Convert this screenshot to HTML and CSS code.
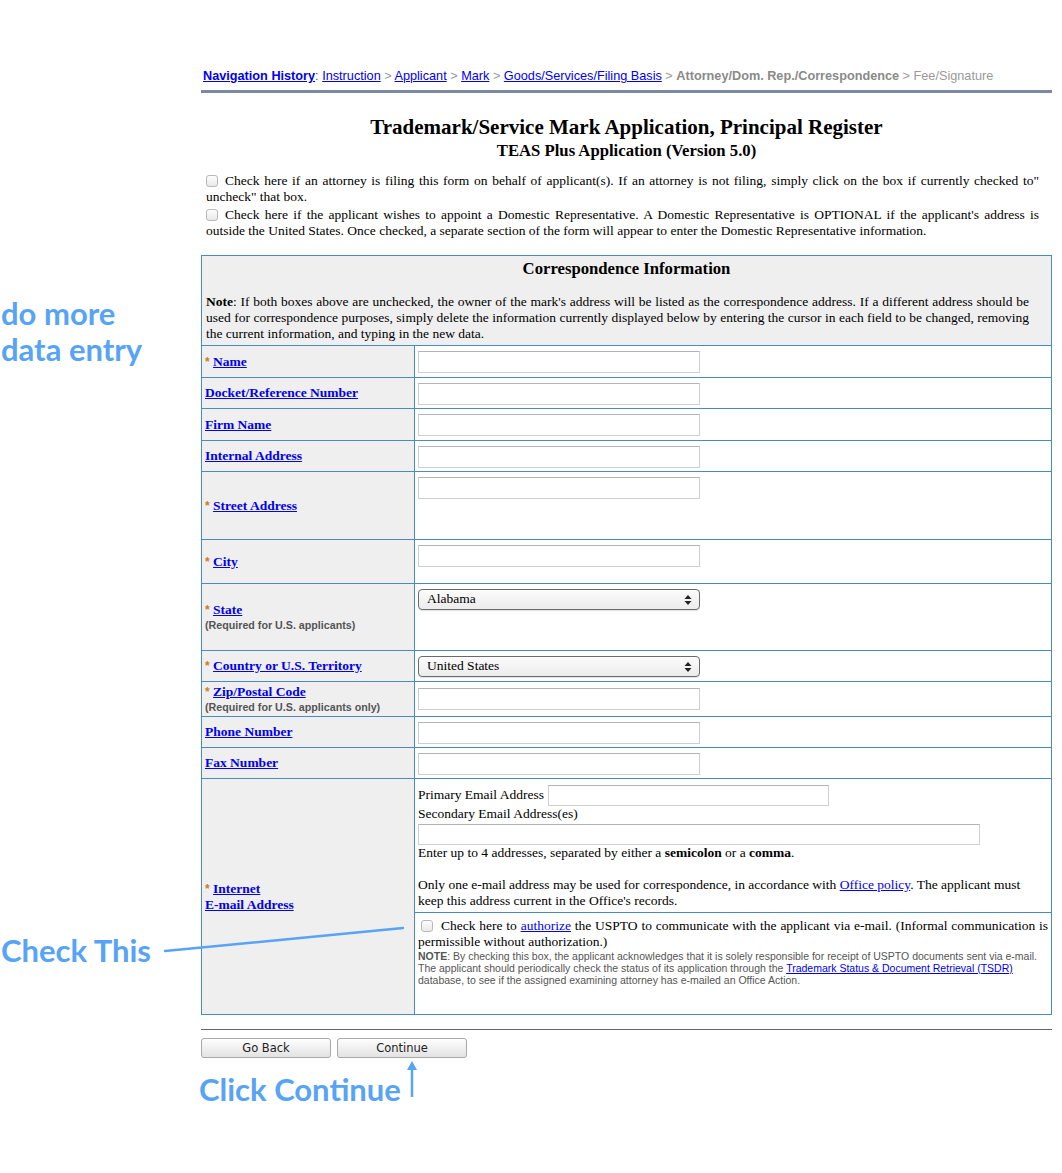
FILE: index.html
```html
<!DOCTYPE html>
<html>
<head>
<meta charset="utf-8">
<title>Trademark/Service Mark Application</title>
<link rel="stylesheet" href="styles.css">
</head>
<body>
<div class="page">
  <div class="main">
    <div class="nav">
      <a class="navhead" href="#">Navigation History</a><span class="colon">:</span>
      <a href="#">Instruction</a> <span class="sep">&gt;</span>
      <a href="#">Applicant</a> <span class="sep">&gt;</span>
      <a href="#">Mark</a> <span class="sep">&gt;</span>
      <a href="#">Goods/Services/Filing Basis</a> <span class="sep">&gt;</span>
      <span class="current">Attorney/Dom. Rep./Correspondence</span> <span class="sep">&gt;</span>
      <span class="future">Fee/Signature</span>
    </div>

    <h1 class="title">Trademark/Service Mark Application, Principal Register</h1>
    <h2 class="subtitle">TEAS Plus Application (Version 5.0)</h2>

    <p class="intro"><span class="cb"></span>Check here if an attorney is filing this form on behalf of applicant(s). If an attorney is not filing, simply click on the box if currently checked to" uncheck" that box.</p>
    <p class="intro second"><span class="cb"></span>Check here if the applicant wishes to appoint a Domestic Representative. A Domestic Representative is OPTIONAL if the applicant's address is outside the United States. Once checked, a separate section of the form will appear to enter the Domestic Representative information.</p>

    <table class="form">
      <colgroup><col class="c1"><col class="c2"></colgroup>
      <tr>
        <td colspan="2" class="head">
          <div class="headtitle">Correspondence Information</div>
          <div class="note"><b>Note</b>: If both boxes above are unchecked, the owner of the mark's address will be listed as the correspondence address. If a different address should be used for correspondence purposes, simply delete the information currently displayed below by entering the cursor in each field to be changed, removing the current information, and typing in the new data.</div>
        </td>
      </tr>
      <tr class="h32">
        <td class="lab"><span class="star">*</span> <a href="#">Name</a></td>
        <td class="fld"><input class="txt" type="text"></td>
      </tr>
      <tr class="h31">
        <td class="lab"><a href="#">Docket/Reference Number</a></td>
        <td class="fld"><input class="txt" type="text"></td>
      </tr>
      <tr class="h32">
        <td class="lab"><a href="#">Firm Name</a></td>
        <td class="fld"><input class="txt" type="text"></td>
      </tr>
      <tr class="h31">
        <td class="lab"><a href="#">Internal Address</a></td>
        <td class="fld"><input class="txt" type="text"></td>
      </tr>
      <tr class="h68">
        <td class="lab"><span class="star">*</span> <a href="#">Street Address</a></td>
        <td class="fld"><input class="txt" type="text"></td>
      </tr>
      <tr class="h44">
        <td class="lab"><span class="star">*</span> <a href="#">City</a></td>
        <td class="fld"><input class="txt" type="text"></td>
      </tr>
      <tr class="h67">
        <td class="lab"><span class="star">*</span> <a href="#">State</a><div class="small">(Required for U.S. applicants)</div></td>
        <td class="fld"><div class="select"><span>Alabama</span><svg class="arrows" width="8" height="12" viewBox="0 0 8 12"><polygon points="4,1 7.5,5 0.5,5" fill="#222"/><polygon points="4,11 7.5,7 0.5,7" fill="#222"/></svg></div></td>
      </tr>
      <tr class="h31">
        <td class="lab"><span class="star">*</span> <a href="#">Country or U.S. Territory</a></td>
        <td class="fld"><div class="select"><span>United States</span><svg class="arrows" width="8" height="12" viewBox="0 0 8 12"><polygon points="4,1 7.5,5 0.5,5" fill="#222"/><polygon points="4,11 7.5,7 0.5,7" fill="#222"/></svg></div></td>
      </tr>
      <tr class="h35">
        <td class="lab"><span class="star">*</span> <a href="#">Zip/Postal Code</a><div class="small">(Required for U.S. applicants only)</div></td>
        <td class="fld fld-zip"><input class="txt" type="text"></td>
      </tr>
      <tr class="h31">
        <td class="lab"><a href="#">Phone Number</a></td>
        <td class="fld"><input class="txt" type="text"></td>
      </tr>
      <tr class="h31">
        <td class="lab"><a href="#">Fax Number</a></td>
        <td class="fld"><input class="txt" type="text"></td>
      </tr>
      <tr class="h236">
        <td class="lab"><span class="star">*</span> <a href="#">Internet</a><br><a href="#">E-mail Address</a></td>
        <td class="fld email">
          <div class="emailtop">
            <div class="prim"><span>Primary Email Address</span><input class="txt txt-prim" type="text"></div>
            <div class="line">Secondary Email Address(es)</div>
            <input class="txt txt-sec" type="text">
            <div class="line">Enter up to 4 addresses, separated by either a <b>semicolon</b> or a <b>comma</b>.</div>
            <div class="line blank">&nbsp;</div>
            <div class="line">Only one e-mail address may be used for correspondence, in accordance with <a href="#" class="plain">Office policy</a>. The applicant must keep this address current in the Office's records.</div>
          </div>
          <div class="emailbot">
            <p class="auth"><span class="cb cb-auth"></span>Check here to <a href="#" class="plain">authorize</a> the USPTO to communicate with the applicant via e-mail. (Informal communication is permissible without authorization.)</p>
            <p class="fine"><b>NOTE</b>: By checking this box, the applicant acknowledges that it is solely responsible for receipt of USPTO documents sent via e-mail. The applicant should periodically check the status of its application through the <a href="#">Trademark Status &amp; Document Retrieval (TSDR)</a> database, to see if the assigned examining attorney has e-mailed an Office Action.</p>
          </div>
        </td>
      </tr>
    </table>

    <div class="rule"></div>
    <div class="buttons">
      <button class="btn" type="button">Go Back</button>
      <button class="btn" type="button">Continue</button>
    </div>
  </div>

  <div class="anno anno-data">do more<br>data entry</div>
  <div class="anno anno-check">Check This</div>
  <div class="anno anno-cont">Click Continue</div>
  <svg class="pointer" width="250" height="40" viewBox="0 0 250 40"><line x1="5" y1="31" x2="243" y2="8" stroke="#57a3f6" stroke-width="2.5" stroke-linecap="round"/></svg>
  <svg class="uparrow" width="16" height="42" viewBox="0 0 16 42"><line x1="8" y1="39" x2="8" y2="8" stroke="#57a3f6" stroke-width="2.5"/><polygon points="8,3 3,12 13,12" fill="#57a3f6"/></svg>
</div>
</body>
</html>
```

FILE: styles.css
```css
html, body {
  margin: 0;
  padding: 0;
  background: #fff;
}
body {
  font-family: "Liberation Serif", "Times New Roman", serif;
  font-size: 13.5px;
  color: #000;
}
.page {
  position: relative;
  width: 1062px;
  min-height: 1173px;
}
.main {
  margin-left: 201px;
  width: 851px;
  padding-top: 68px;
}
.nav {
  font-family: "Liberation Sans", Arial, sans-serif;
  font-size: 12.7px;
  line-height: 16px;
  padding: 0 0 6px 2px;
  border-bottom: 3px solid #7b8aa2;
  color: #888;
  white-space: nowrap;
}
.nav a {
  color: #00e;
  text-decoration: underline;
}
.nav .navhead {
  font-weight: bold;
}
.nav .colon { color: #555; }
.nav .sep { color: #999; }
.nav .current {
  font-weight: bold;
  color: #8a8a8a;
}
.nav .future { color: #9a9a9a; }

.title {
  margin: 22px 0 0;
  font-size: 21px;
  line-height: 24px;
  font-weight: bold;
  text-align: center;
}
.subtitle {
  margin: 2px 0 0;
  font-size: 16.7px;
  line-height: 20px;
  font-weight: bold;
  text-align: center;
}
.intro {
  margin: 12px 0 0;
  padding: 0 13px 0 5px;
  line-height: 16px;
  text-align: justify;
}
.intro.second {
  margin-top: 2px;
}
.cb {
  display: inline-block;
  width: 10px;
  height: 10px;
  border: 1px solid #b9b9b9;
  border-radius: 3px;
  background: linear-gradient(#fdfdfd, #e9e9e9);
  vertical-align: -2px;
  margin-right: 7px;
}

.form {
  margin-top: 16px;
  width: 851px;
  border-collapse: collapse;
  table-layout: fixed;
  border: 1px solid #4a8bc4;
}
.form .c1 { width: 213px; }
.form td {
  border: 1px solid #4a8bc4;
  padding: 0;
}
.head {
  background: #efefef;
  padding: 3px 0 3px 0 !important;
}
.headtitle {
  text-align: center;
  font-size: 16.7px;
  line-height: 20px;
  font-weight: bold;
}
.note {
  margin-top: 15px;
  padding: 0 22px 0 4px;
  line-height: 16px;
  text-align: justify;
}
.lab {
  background: #efefef;
  vertical-align: middle;
  padding: 0 3px !important;
  font-weight: bold;
  line-height: 16px;
}
.lab a {
  color: #00e;
  text-decoration: underline;
}
.star {
  color: #c8802e;
  font-family: "Liberation Sans", Arial, sans-serif;
  font-size: 12px;
}
.small {
  font-family: "Liberation Sans", Arial, sans-serif;
  font-size: 10.7px;
  line-height: 14px;
  color: #555;
  font-weight: bold;
}
.fld {
  vertical-align: top;
  padding: 5px 3px 0 !important;
}
.fld-zip {
  padding-top: 6px !important;
}
.h32 .lab { height: 31px; }
.h31 .lab { height: 30px; }
.h68 .lab { height: 67px; }
.h44 .lab { height: 43px; }
.h67 .lab { height: 66px; }
.h35 .lab { height: 34px; }
.h236 .lab { height: 235px; }

.txt {
  display: block;
  box-sizing: border-box;
  width: 282px;
  height: 22px;
  margin: 0;
  padding: 0 3px;
  border: 1px solid #cfcfcf;
  border-top-color: #b3b3b3;
  background: #fff;
  font-family: "Liberation Serif", serif;
  font-size: 13px;
}
.select {
  box-sizing: border-box;
  width: 282px;
  height: 21px;
  border: 1px solid #6a6a6a;
  border-radius: 4px;
  background: linear-gradient(#fbfbfb, #ececec);
  display: flex;
  align-items: center;
  justify-content: space-between;
  padding: 0 7px 0 8px;
  font-size: 13.5px;
  line-height: 16px;
  box-shadow: 0 1px 1px rgba(0,0,0,0.12);
}
.select span {
  margin-top: -2px;
}

.email {
  padding: 0 !important;
}
.emailtop {
  padding: 5px 3px 3px;
  line-height: 16px;
}
.prim {
  display: flex;
  align-items: center;
  gap: 4px;
  height: 22px;
}
.txt-prim {
  width: 281px;
  height: 21px;
}
.line {
  line-height: 16px;
}
.txt-sec {
  width: 562px;
  height: 21px;
  margin-top: 2px;
}
a.plain {
  color: #00e;
  text-decoration: underline;
  font-weight: normal;
}
.emailbot {
  border-top: 1px solid #4a8bc4;
  padding: 5px 3px 0;
}
.auth {
  margin: 0;
  line-height: 16px;
  text-align: justify;
}
.cb-auth {
  margin-left: 3px;
  margin-right: 8px;
}
.fine {
  margin: 0;
  font-family: "Liberation Sans", Arial, sans-serif;
  font-size: 10.5px;
  line-height: 12px;
  color: #555;
}
.fine b { color: #555; }
.fine a {
  color: #00e;
  text-decoration: underline;
}

.rule {
  margin-top: 14px;
  border-top: 1px solid #666;
}
.buttons {
  margin-top: 8px;
  display: flex;
  gap: 6px;
}
.btn {
  box-sizing: border-box;
  width: 130px;
  height: 20px;
  margin: 0;
  padding: 0;
  border: 1px solid #a9a9a9;
  border-radius: 3px;
  background: linear-gradient(#fefefe, #e3e3e3);
  font-family: "DejaVu Sans", "Liberation Sans", sans-serif;
  font-size: 11.5px;
  color: #222;
  line-height: 18px;
}

.anno {
  position: absolute;
  font-family: Lato, "Open Sans", sans-serif;
  font-weight: bold;
  font-size: 31px;
  line-height: 36px;
  color: #57a3f6;
  white-space: nowrap;
}
.anno-data { left: 1px; top: 295px; }
.anno-check { left: 1px; top: 932px; }
.anno-cont { left: 199px; top: 1071px; }
.pointer {
  position: absolute;
  left: 160px;
  top: 920px;
}
.uparrow {
  position: absolute;
  left: 404px;
  top: 1058px;
}
```
